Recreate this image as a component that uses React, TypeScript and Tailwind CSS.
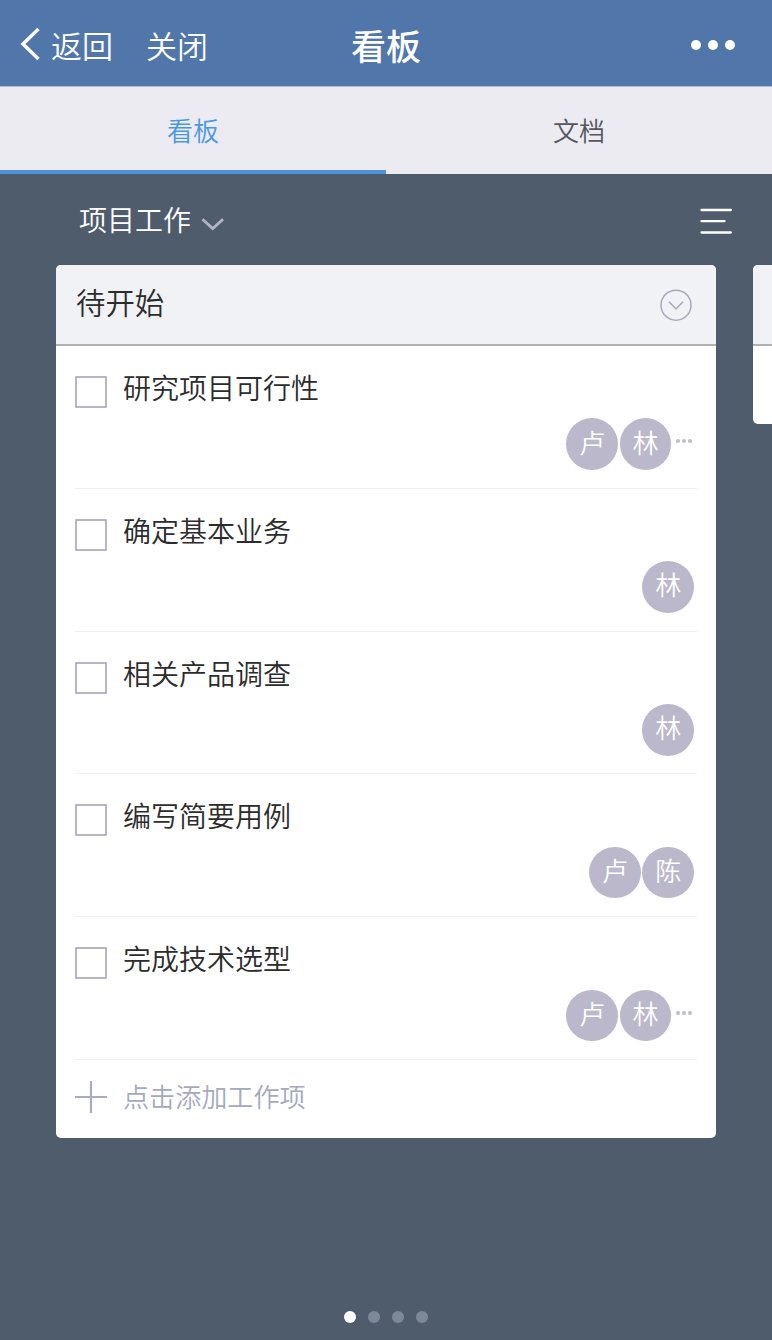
import React from "react";

type Task = { title: string; members: string[]; more?: boolean };

const tasks: Task[] = [
  { title: "研究项目可行性", members: ["卢", "林"], more: true },
  { title: "确定基本业务", members: ["林"] },
  { title: "相关产品调查", members: ["林"] },
  { title: "编写简要用例", members: ["卢", "陈"] },
  { title: "完成技术选型", members: ["卢", "林"], more: true },
];

function Header() {
  return (
    <header className="grid h-[86px] shrink-0 grid-cols-3 items-center bg-[#5076aa] text-white">
      <div className="flex items-center pt-1 pl-5">
        <svg className="-mt-0.5 h-[34px] w-[22px]" viewBox="0 0 22 34" fill="none" stroke="currentColor" strokeWidth="3.4">
          <path d="M18.5 2 L3 17 L18.5 32" />
        </svg>
        <a className="ml-[9px] text-[31px] leading-[44px]">返回</a>
        <a className="ml-[33px] text-[31px] leading-[44px]">关闭</a>
      </div>
      <h1 className="pt-1 text-center text-[35px] leading-[48px] font-medium">看板</h1>
      <div className="flex items-center justify-end gap-[7px] pt-[3px] pr-[37px]">
        <i className="size-[10px] rounded-full bg-white" />
        <i className="size-[10px] rounded-full bg-white" />
        <i className="size-[10px] rounded-full bg-white" />
      </div>
    </header>
  );
}

function Tabs() {
  return (
    <nav className="grid h-[88px] shrink-0 grid-cols-2 border-t border-[#a5bdd0] bg-[#ebebf1] text-center text-[26px]">
      <a className="border-b-4 border-[#4a94dc] pt-[3px] leading-[80px] text-[#4a98e0]">看板</a>
      <a className="pt-[3px] leading-[80px] text-[#55565f]">文档</a>
    </nav>
  );
}

function Avatar({ name }: { name: string }) {
  return (
    <span className="flex size-[51.6px] items-center justify-center rounded-full bg-[#bab8ca] pb-[5px] text-[26px] leading-[40px] text-white">
      {name}
    </span>
  );
}

function TaskRow({ task }: { task: Task }) {
  return (
    <li className="flex h-[142.8px] flex-col border-b-[1.5px] border-[#f1f1f4]">
      <div className="flex pt-[21px]">
        <svg className="mt-[9px] size-8" viewBox="0 0 32 32" fill="none" stroke="#a5a4bb" strokeWidth="1.6">
          <rect x="1" y="1" width="30" height="30" />
        </svg>
        <span className="ml-4 text-[28px] leading-[40px] text-[#2c2c2c]">{task.title}</span>
      </div>
      <div className="mt-[10.4px] flex justify-end gap-[1.7px] pr-[3px]">
        {task.members.map((m) => (
          <Avatar key={m} name={m} />
        ))}
        {task.more && (
          <span className="mt-[21px] mr-[2.5px] ml-[2.5px] flex gap-[2px]">
            <i className="size-1 rounded-full bg-[#c0bfc6]" />
            <i className="size-1 rounded-full bg-[#c0bfc6]" />
            <i className="size-1 rounded-full bg-[#c0bfc6]" />
          </span>
        )}
      </div>
    </li>
  );
}

export default function App() {
  return (
    <div
      lang="zh-CN"
      className="flex h-[1340px] w-[772px] flex-col overflow-hidden bg-[#4f5c6c] font-['Noto_Sans_CJK_SC',sans-serif] font-[350]"
    >
      <Header />
      <Tabs />
      <div className="flex h-[91px] shrink-0 items-center justify-between pr-10 pl-[79px] text-white">
        <div className="flex items-center">
          <span className="pb-0.5 text-[28px] leading-[40px]">项目工作</span>
          <svg className="mt-[8px] ml-[10px] h-[14px] w-6" viewBox="0 0 24 14" fill="none" stroke="#b0b4c4" strokeWidth="2.8">
            <path d="M1.5 2.3 L11.7 11.6 L22 2.3" />
          </svg>
        </div>
        <svg className="mt-[3px] h-[26px] w-8" viewBox="0 0 32 26" stroke="currentColor" strokeWidth="2.3" strokeLinecap="round">
          <path d="M1.5 2H30.8M1.5 13.2H24.5M1.5 24.5H30.8" />
        </svg>
      </div>
      <main className="flex items-start gap-[37px]">
        <section className="ml-14 w-[660px] shrink-0 overflow-hidden rounded-[5px] bg-white">
          <div className="flex h-[81px] items-center justify-between border-b-2 border-[#b0b1b5] bg-[#f0f2f6] pr-6 pl-5">
            <h2 className="pb-2 text-[29.4px] leading-[44px] text-[#2c2c2c]">待开始</h2>
            <svg className="mt-px size-8" viewBox="0 0 32 32" fill="none" stroke="#a9a7bb" strokeWidth="1.5">
              <circle cx="16" cy="16.2" r="15" />
              <path d="M9 12.7 L16 19.9 L23 12.7" />
            </svg>
          </div>
          <ul className="px-[19px]">
            {tasks.map((t) => (
              <TaskRow key={t.title} task={t} />
            ))}
          </ul>
          <div className="flex h-[78.5px] items-center px-[19px] pb-[5px]">
            <svg className="size-8" viewBox="0 0 32 32" stroke="#a9abc1" strokeWidth="2.2">
              <path d="M16 0V32M0 16H32" />
            </svg>
            <span className="ml-4 pb-0.5 text-[26.1px] leading-[40px] text-[#a5a9bf]">点击添加工作项</span>
          </div>
        </section>
        <section className="h-[159px] w-[660px] shrink-0 overflow-hidden rounded-[5px] bg-white">
          <div className="h-[81px] border-b-2 border-[#b0b1b5] bg-[#f0f2f6]" />
        </section>
      </main>
      <footer className="mt-auto flex justify-center gap-3 pb-[17px]">
        <i className="size-3 rounded-full bg-white" />
        <i className="size-3 rounded-full bg-[#7d8999]" />
        <i className="size-3 rounded-full bg-[#7d8999]" />
        <i className="size-3 rounded-full bg-[#7d8999]" />
      </footer>
    </div>
  );
}
